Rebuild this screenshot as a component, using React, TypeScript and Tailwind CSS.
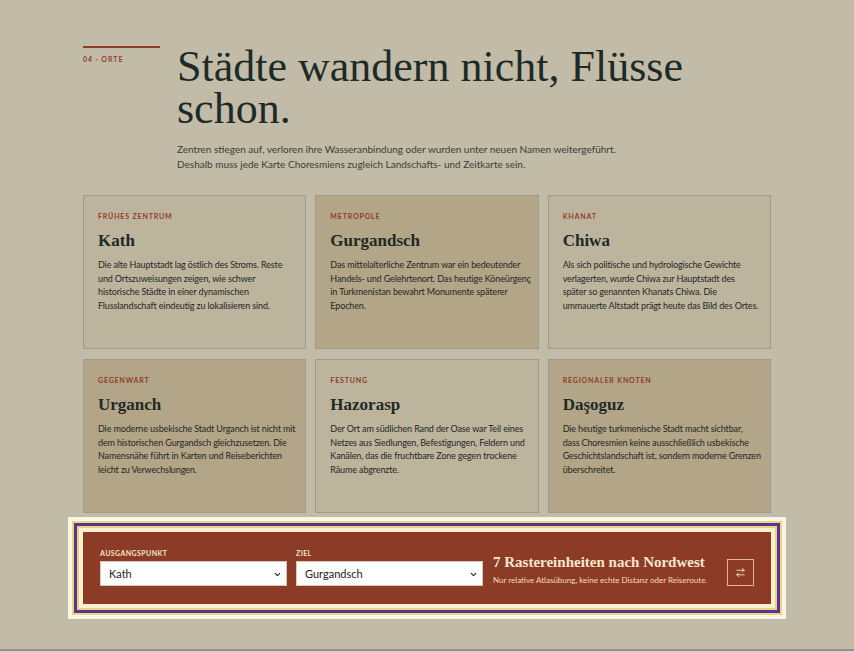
import { ArrowRightLeft, ChevronDown } from 'lucide-react';

type Place = {
    tag: string;
    name: string;
    lines: string[];
    dark: boolean;
};

// card copy is set line by line so the rag stays the same in every font
const places: Place[] = [
    {
        tag: 'Frühes Zentrum',
        name: 'Kath',
        lines: [
            'Die alte Hauptstadt lag östlich des Stroms. Reste',
            'und Ortszuweisungen zeigen, wie schwer',
            'historische Städte in einer dynamischen',
            'Flusslandschaft eindeutig zu lokalisieren sind.',
        ],
        dark: false,
    },
    {
        tag: 'Metropole',
        name: 'Gurgandsch',
        lines: [
            'Das mittelalterliche Zentrum war ein bedeutender',
            'Handels- und Gelehrtenort. Das heutige Köneürgenç',
            'in Turkmenistan bewahrt Monumente späterer',
            'Epochen.',
        ],
        dark: true,
    },
    {
        tag: 'Khanat',
        name: 'Chiwa',
        lines: [
            'Als sich politische und hydrologische Gewichte',
            'verlagerten, wurde Chiwa zur Hauptstadt des',
            'später so genannten Khanats Chiwa. Die',
            'ummauerte Altstadt prägt heute das Bild des Ortes.',
        ],
        dark: false,
    },
    {
        tag: 'Gegenwart',
        name: 'Urganch',
        lines: [
            'Die moderne usbekische Stadt Urganch ist nicht mit',
            'dem historischen Gurgandsch gleichzusetzen. Die',
            'Namensnähe führt in Karten und Reiseberichten',
            'leicht zu Verwechslungen.',
        ],
        dark: true,
    },
    {
        tag: 'Festung',
        name: 'Hazorasp',
        lines: [
            'Der Ort am südlichen Rand der Oase war Teil eines',
            'Netzes aus Siedlungen, Befestigungen, Feldern und',
            'Kanälen, das die fruchtbare Zone gegen trockene',
            'Räume abgrenzte.',
        ],
        dark: false,
    },
    {
        tag: 'Regionaler Knoten',
        name: 'Daşoguz',
        lines: [
            'Die heutige turkmenische Stadt macht sichtbar,',
            'dass Choresmien keine ausschließlich usbekische',
            'Geschichtslandschaft ist, sondern moderne Grenzen',
            'überschreitet.',
        ],
        dark: true,
    },
];

const serif = "font-['Georgia','Liberation_Serif',serif]";
const sans = "font-['Trebuchet_MS','Lato',sans-serif]";

function PlaceCard({ place }: { place: Place }) {
    return (
        <div
            className={`h-[154px] border border-[#a19b89] pl-[14px] pr-[4px] pt-[17px] ${
                place.dark ? 'bg-[#b3a587]' : 'bg-[#bdb49e]'
            }`}
        >
            <div className={`${sans} text-[7px] font-bold uppercase tracking-[0.12em] text-[#8e3d29] leading-none`}>
                {place.tag}
            </div>
            <h3 className={`${serif} mt-[12px] text-[17px] font-bold leading-none text-[#1f2a26]`}>
                {place.name}
            </h3>
            <p className={`${sans} mt-[9px] text-[9px] leading-[13.6px] tracking-[-0.015em] text-[#26271f]`}>
                {place.lines.map((line) => (
                    <span key={line} className="block whitespace-nowrap">
                        {line}
                    </span>
                ))}
            </p>
        </div>
    );
}

function PlaceSelect({ label, value }: { label: string; value: string }) {
    return (
        <div className="flex flex-col">
            <span className={`${sans} text-[7px] font-bold uppercase tracking-[0.06em] text-[#f6e3c8] leading-none`}>
                {label}
            </span>
            <div className="relative mt-[4px] h-[25px] bg-white border border-[#d9c9b2]">
                <span className={`${sans} absolute left-[8px] top-[5px] text-[11px] leading-[14px] text-[#222]`}>
                    {value}
                </span>
                <ChevronDown className="absolute right-[4px] top-[8px] w-[9px] h-[9px] text-[#222]" strokeWidth={3} />
            </div>
        </div>
    );
}

export default function App() {
    return (
        <div className="min-h-[651px] bg-[#c2bba8] pt-[46px]">
            <div className="mx-auto w-[688px]">
                <header className="flex">
                    <div className="w-[77px] shrink-0">
                        <div className="h-[2px] bg-[#8e3d29]" />
                        <div className={`${sans} mt-[8px] text-[7px] font-bold tracking-[0.14em] text-[#8e3d29] leading-none`}>
                            04 · ORTE
                        </div>
                    </div>
                    <div className="ml-[17px]">
                        <h1 className={`${serif} text-[44px] leading-[42px] text-[#1d2b27]`}>
                            Städte wandern nicht, Flüsse schon.
                        </h1>
                        <p className={`${sans} mt-[12px] text-[10px] leading-[15px] text-[#3b3c36]`}>
                            Zentren stiegen auf, verloren ihre Wasseranbindung oder wurden unter neuen Namen weitergeführt.
                            <br />
                            Deshalb muss jede Karte Choresmiens zugleich Landschafts- und Zeitkarte sein.
                        </p>
                    </div>
                </header>

                <div className="mt-[23px] grid grid-cols-3 gap-x-[9px] gap-y-[10px]">
                    {places.map((p) => (
                        <PlaceCard key={p.name} place={p} />
                    ))}
                </div>

                <div className="mt-[19px] bg-[#8c3c26] h-[72px] px-[17px] pt-[18px] shadow-[0_0_0_4px_#fdf0d0,0_0_0_6px_#f4cf76,0_0_0_9px_#4b3a9e,0_0_0_11px_#f5d27e,0_0_0_15px_#fbf5e6]">
                    <div className="grid grid-cols-[187px_187px_1fr_27px] gap-x-[9px] items-start">
                        <PlaceSelect label="Ausgangspunkt" value="Kath" />
                        <PlaceSelect label="Ziel" value="Gurgandsch" />
                        <div className="pt-[5px] pl-[1px]">
                            <div className={`${serif} text-[15px] font-bold leading-none text-[#f7e6cb]`}>
                                7 Rastereinheiten nach Nordwest
                            </div>
                            <div className={`${sans} mt-[6px] text-[8px] leading-none text-[#f1dcc2]`}>
                                Nur relative Atlasübung, keine echte Distanz oder Reiseroute.
                            </div>
                        </div>
                        <button
                            type="button"
                            className="mt-[9px] h-[27px] w-[27px] border border-[#e2b596] flex items-center justify-center text-[#f6e3c8]"
                        >
                            <ArrowRightLeft className="w-[11px] h-[11px]" strokeWidth={2} />
                        </button>
                    </div>
                </div>
            </div>
            <div className="mt-[45px] h-[2px] bg-[#7f9a91]" />
        </div>
    );
}
